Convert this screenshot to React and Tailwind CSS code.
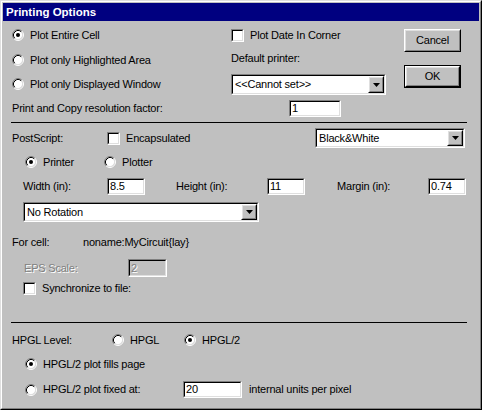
import React from 'react'

function Radio({ checked }) {
  return (
    <svg width="12" height="12" viewBox="0 0 12 12" className="shrink-0">
      <circle cx="6" cy="6" r="4.5" fill="#fff" />
      <path d="M2.11 9.89A5.5 5.5 0 0 1 9.89 2.11" stroke="#808080" fill="none" />
      <path d="M9.89 2.11A5.5 5.5 0 0 1 2.11 9.89" stroke="#fff" fill="none" />
      <path d="M2.82 9.18A4.5 4.5 0 0 1 9.18 2.82" stroke="#000" fill="none" />
      <path d="M9.18 2.82A4.5 4.5 0 0 1 2.82 9.18" stroke="#dfdfdf" fill="none" />
      {checked ? <circle cx="6" cy="6" r="2" fill="#000" /> : null}
    </svg>
  )
}

function Sunken({ className = '', inner = 'bg-white', children }) {
  return (
    <div className={`shrink-0 border border-t-[#808080] border-l-[#808080] border-b-white border-r-white ${className}`}>
      <div className={`h-full border border-t-black border-l-black border-b-[#dfdfdf] border-r-[#dfdfdf] ${inner}`}>
        {children}
      </div>
    </div>
  )
}

function Checkbox() {
  return <Sunken className="h-[13px] w-[13px]" />
}

function Field({ value, className = '', disabled }) {
  return (
    <Sunken className={className} inner={disabled ? 'bg-[#c0c0c0]' : 'bg-white'}>
      <div
        className={`flex h-full items-center pl-[1px] ${
          disabled ? 'text-[#808080] [text-shadow:1px_1px_0_#fff]' : 'text-black'
        }`}
      >
        {value}
      </div>
    </Sunken>
  )
}

function Raised({ className = '', children }) {
  return (
    <div className={`border border-t-white border-l-white border-b-black border-r-black ${className}`}>
      <div className="flex h-full items-center justify-center border border-t-[#dfdfdf] border-l-[#dfdfdf] border-b-[#808080] border-r-[#808080]">
        {children}
      </div>
    </div>
  )
}

function Combo({ value, className = '' }) {
  return (
    <Sunken className={className}>
      <div className="flex h-full items-center">
        <span className="flex-1 pl-[2px]">{value}</span>
        <Raised className="h-full w-[16px] bg-[#c0c0c0]">
          <svg width="7" height="4" viewBox="0 0 7 4">
            <polygon points="0,0 7,0 3.5,4" fill="#000" />
          </svg>
        </Raised>
      </div>
    </Sunken>
  )
}

function Button({ children, isDefault }) {
  if (isDefault) {
    return (
      <div className="h-[23px] w-[57px] border border-black">
        <Raised className="h-full w-full">{children}</Raised>
      </div>
    )
  }
  return <Raised className="h-[23px] w-[57px]">{children}</Raised>
}

function RadioRow({ checked, label, className = '' }) {
  return (
    <div className={`flex items-center gap-[6px] ${className}`}>
      <Radio checked={checked} />
      <span>{label}</span>
    </div>
  )
}

export default function App() {
  return (
    <div className="h-[410px] w-[482px] border border-t-[#dfdfdf] border-l-[#dfdfdf] border-b-black border-r-black bg-[#c0c0c0] font-['Liberation_Sans',Arial,sans-serif] text-[11px] leading-[13px] tracking-[-0.2px] text-black">
      <div className="h-full border border-t-white border-l-white border-b-[#808080] border-r-[#808080] p-px">
        <div className="flex h-[18px] items-center bg-[#000080] pl-[3px] text-[11.5px] font-bold tracking-normal text-white">
          Printing Options
        </div>

        <div className="flex">
          <div className="ml-[9px] mt-[1px] flex w-[219px] flex-col">
            <RadioRow checked label="Plot Entire Cell" className="h-[26px]" />
            <RadioRow label="Plot only Highlighted Area" className="h-[24px]" />
            <RadioRow label="Plot only Displayed Window" className="h-[24px]" />
          </div>
          <div className="mt-[1px] flex w-[173px] flex-col">
            <div className="flex h-[26px] items-center gap-[6px]">
              <Checkbox />
              <span>Plot Date In Corner</span>
            </div>
            <div className="flex h-[20px] items-center">Default printer:</div>
            <Combo value="<<Cannot set>>" className="mt-[6px] h-[21px] w-[155px]" />
          </div>
          <div className="flex flex-col gap-[13px] pt-[8px]">
            <Button>Cancel</Button>
            <Button isDefault>OK</Button>
          </div>
        </div>

        <div className="mt-[4px] flex h-[17px] items-center">
          <span className="ml-[9px] w-[277px]">Print and Copy resolution factor:</span>
          <Field value="1" className="h-[17px] w-[52px]" />
        </div>

        <div className="ml-[8px] mt-[5px] w-[456px] border-t border-black" />

        <div className="mt-[5px] flex h-[20px] items-center">
          <span className="ml-[9px] w-[95px]">PostScript:</span>
          <div className="flex w-[208px] items-center gap-[6px]">
            <Checkbox />
            <span>Encapsulated</span>
          </div>
          <Combo value="Black&White" className="h-[20px] w-[150px]" />
        </div>

        <div className="mt-[2px] flex h-[24px] items-center">
          <RadioRow checked label="Printer" className="ml-[22px] w-[79px] gap-[5px]" />
          <RadioRow label="Plotter" className="gap-[5px]" />
        </div>

        <div className="mt-[4px] flex h-[17px] items-center">
          <span className="ml-[20px] w-[84px]">Width (in):</span>
          <Field value="8.5" className="h-[17px] w-[38px]" />
          <span className="ml-[31px] w-[91px]">Height (in):</span>
          <Field value="11" className="h-[17px] w-[38px]" />
          <span className="ml-[32px] w-[91px]">Margin (in):</span>
          <Field value="0.74" className="h-[17px] w-[38px]" />
        </div>

        <Combo value="No Rotation" className="ml-[20px] mt-[7px] h-[20px] w-[236px]" />

        <div className="mt-[12px] flex h-[16px] items-center">
          <span className="ml-[9px] w-[71px]">For cell:</span>
          <span>noname:MyCircuit{'{lay}'}</span>
        </div>

        <div className="mt-[9px] flex h-[18px] items-center">
          <span className="ml-[21px] w-[104px] text-[#808080] [text-shadow:1px_1px_0_#fff]">EPS Scale:</span>
          <Field value="2" disabled className="h-[18px] w-[39px]" />
        </div>

        <div className="ml-[20px] mt-[3px] flex h-[16px] items-center gap-[6px]">
          <Checkbox />
          <span>Synchronize to file:</span>
        </div>

        <div className="ml-[8px] mt-[26px] w-[456px] border-t border-black" />

        <div className="mt-[9px] flex h-[16px] items-center">
          <span className="ml-[9px] w-[100px]">HPGL Level:</span>
          <RadioRow label="HPGL" className="w-[72px] gap-[5px]" />
          <RadioRow checked label="HPGL/2" className="gap-[5px]" />
        </div>

        <RadioRow checked label="HPGL/2 plot fills page" className="ml-[22px] mt-[8px] h-[16px] gap-[5px]" />

        <div className="mt-[9px] flex h-[17px] items-center">
          <RadioRow label="HPGL/2 plot fixed at:" className="ml-[22px] w-[158px] gap-[5px]" />
          <Field value="20" className="h-[17px] w-[59px]" />
          <span className="ml-[7px]">internal units per pixel</span>
        </div>
      </div>
    </div>
  )
}
